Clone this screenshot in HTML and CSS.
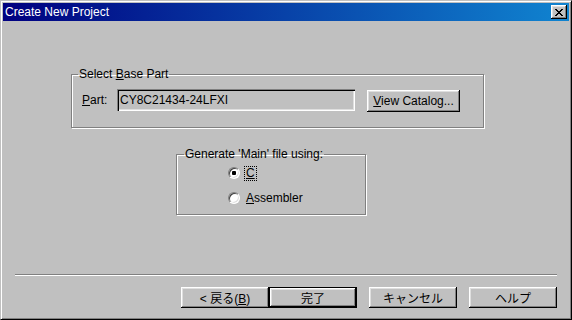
FILE: index.html
```html
<!DOCTYPE html>
<html lang="ja">
<head>
    <meta charset="UTF-8">
    <meta name="viewport" content="width=device-width, initial-scale=1.0">
    <title>Create New Project</title>
    <link rel="stylesheet" href="styles.css">
</head>
<body>
    <div class="dialog">
        <div class="titlebar">
            <span class="title">Create New Project</span>
            <button class="close" type="button">
                <svg width="8" height="7" viewBox="0 0 8 7" shape-rendering="crispEdges">
                    <path d="M0 0h2v1h-2z M6 0h2v1h-2z M1 1h2v1h-2z M5 1h2v1h-2z M2 2h4v1h-4z M3 3h2v1h-2z M2 4h4v1h-4z M1 5h2v1h-2z M5 5h2v1h-2z M0 6h2v1h-2z M6 6h2v1h-2z" fill="#000"/>
                </svg>
            </button>
        </div>
        <div class="content">
            <fieldset class="group part-group">
                <legend>Select <u>B</u>ase Part</legend>
                <div class="part-row">
                    <span class="part-label"><u>P</u>art:</span>
                    <div class="field">CY8C21434-24LFXI</div>
                    <button class="btn catalog" type="button"><u>V</u>iew Catalog...</button>
                </div>
            </fieldset>
            <fieldset class="group main-group">
                <legend>Generate 'Main' file using:</legend>
                <div class="radio-row">
                    <span class="radio checked"></span>
                    <span class="radio-text focused"><u>C</u></span>
                </div>
                <div class="radio-row">
                    <span class="radio"></span>
                    <span class="radio-text"><u>A</u>ssembler</span>
                </div>
            </fieldset>
            <div class="footer">
                <div class="separator"></div>
                <div class="buttons">
                    <button class="btn" type="button">&lt; 戻る(<u>B</u>)</button>
                    <button class="btn default" type="button">完了</button>
                    <button class="btn spaced" type="button">キャンセル</button>
                    <button class="btn spaced" type="button">ヘルプ</button>
                </div>
            </div>
        </div>
    </div>
</body>
</html>
```

FILE: styles.css
```css
body {
    margin: 0;
    padding: 0;
    font-family: "Liberation Sans", "Noto Sans CJK JP", sans-serif;
    font-size: 12px;
    color: #000;
    background: #c0c0c0;
}
.dialog {
    box-sizing: border-box;
    width: 572px;
    height: 320px;
    border: 1px solid;
    border-color: #c0c0c0 #000 #000 #c0c0c0;
    box-shadow: inset 1px 1px #fff, inset -1px -1px #808080;
    padding: 2px;
    background: #c0c0c0;
    display: flex;
    flex-direction: column;
}
.titlebar {
    height: 18px;
    display: flex;
    align-items: center;
    padding: 0 2px;
    background: linear-gradient(to right, #000080, #1084d0);
    color: #fff;
}
.title {
    line-height: 14px;
}
.close {
    margin-left: auto;
    width: 16px;
    height: 14px;
    padding: 0;
    border: 0;
    background: #c0c0c0;
    box-shadow: inset -1px -1px #000, inset 1px 1px #fff, inset -2px -2px #808080, inset 2px 2px #dfdfdf;
    display: flex;
    align-items: center;
    justify-content: center;
}
.close svg {
    display: block;
    margin-left: -1px;
}
.content {
    flex: 1;
    display: flex;
    flex-direction: column;
}
.group {
    box-sizing: border-box;
    min-inline-size: 0;
    border: 1px solid #808080;
    box-shadow: 1px 1px 0 #fff, inset 1px 1px 0 #fff;
}
.group legend {
    padding: 0 1px;
    line-height: 12px;
    white-space: nowrap;
}
.part-group {
    width: 413px;
    margin: 47px 0 0 68px;
    padding: 9px 0 15px 0;
}
.part-group legend {
    margin-left: 6px;
}
.part-row {
    display: flex;
    align-items: flex-start;
    padding-left: 10px;
}
.part-label {
    width: 35px;
    line-height: 22px;
}
.field {
    box-sizing: border-box;
    width: 238px;
    height: 22px;
    line-height: 22px;
    padding-left: 3px;
    background: #c0c0c0;
    box-shadow: inset 1px 1px #808080, inset 2px 2px #000, inset -1px -1px #fff, inset -2px -2px #dfdfdf;
}
.btn {
    box-sizing: border-box;
    width: 88px;
    height: 21px;
    padding: 0;
    border: 0;
    background: #c0c0c0;
    font-family: "Liberation Sans", "Noto Sans CJK JP", sans-serif;
    font-size: 12px;
    color: #000;
    box-shadow: inset -1px -1px #000, inset 1px 1px #fff, inset -2px -2px #808080, inset 2px 2px #dfdfdf;
}
.catalog {
    width: 93px;
    height: 22px;
    margin: 1px 0 0 12px;
}
.main-group {
    width: 190px;
    margin: 20px 0 0 173px;
    padding: 5px 0 8px 0;
}
.main-group legend {
    margin-left: 7px;
}
.radio-row {
    display: flex;
    align-items: center;
    height: 16px;
    padding-left: 51px;
}
.radio-row + .radio-row {
    margin-top: 9px;
}
.radio {
    box-sizing: border-box;
    width: 12px;
    height: 12px;
    border-radius: 50%;
    border: 1px solid;
    border-color: #808080 #fff #fff #808080;
    background: #fff;
    box-shadow: inset 1px 1px #404040, inset -1px -1px #dfdfdf;
}
.radio.checked {
    background: radial-gradient(circle, #000 2px, #fff 2.5px);
}
.radio-text {
    margin-left: 4px;
    padding: 0 1px;
    border: 1px solid transparent;
    line-height: 13px;
}
.radio-text.focused {
    border: 1px dotted #000;
}
.footer {
    margin-top: auto;
}
.separator {
    height: 0;
    margin: 0 12px;
    border-top: 1px solid #808080;
    border-bottom: 1px solid #fff;
}
.buttons {
    display: flex;
    justify-content: flex-end;
    margin-top: 11px;
    padding: 0 12px 9px 0;
}
.btn.default {
    border: 1px solid #000;
}
.btn.spaced {
    margin-left: 12px;
}
```
